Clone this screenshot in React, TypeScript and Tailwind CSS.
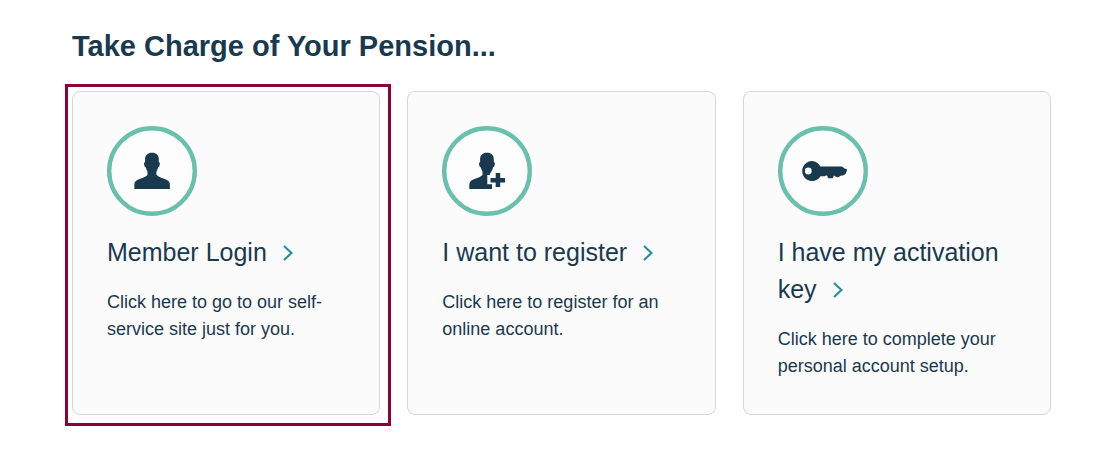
import type { ReactNode } from 'react';

interface PensionCardProps {
  title: string;
  description: string;
  icon: ReactNode;
  highlighted?: boolean;
}

const PersonIcon = () => (
  <path d="M45 26.7c4.400 0 6.800 2.500 6.800 6.300v3c1.300.3 1.300 2.200.6 4-.3.9-.8 1.400-1.400 1.500-.3 1.700-.8 3-1.600 4v3.300c2 2.600 6 3.200 9.500 4.700 3 1.200 4 3.200 4 5.500v4H27.300v-4c0-2.300 1-4.300 4-5.500 3.500-1.500 7.500-2.100 9.200-4.700v-3.300c-.8-1-1.300-2.300-1.600-4-.6-.1-1.100-.6-1.400-1.500-.7-1.800-.7-3.700.6-4v-3c0-3.800 2.500-6.300 6.900-6.300z" />
);

const RegisterIcon = () => (
  <>
    <path d="M45 26.700c4.400 0 6.800 2.500 6.800 6.300v3c1.300.3 1.300 2.200.6 4-.3.9-.8 1.400-1.400 1.500-.3 1.700-.8 3-1.600 4-.8 1.200-1.600 2.300-1.600 3.500h-2.500v9.300h4.700V63H27.300v-4c0-2.300 1-4.300 4-5.500 3.500-1.500 7.500-2.100 9.200-4.700v-3.300c-.8-1-1.300-2.300-1.600-4-.6-.1-1.100-.6-1.400-1.500-.7-1.800-.7-3.700.6-4v-3c0-3.800 2.500-6.300 6.900-6.300z" />
    <path d="M53.700 47h4.500v5h4.800v4.500h-4.800V61h-4.500v-4.500h-5.200V52h5.200z" />
  </>
);

const KeyIcon = () => (
  <path
    fillRule="evenodd"
    d="M33.300 35c4 0 7.400 2.200 9 5.400H64l2.500 2.100 2.100.6.400 1.400-1.500 3.500-2.500 1.400-1.800.2-3.500 1.900-3-1.600-1.200-.4v1.200l-.6 1.500h-4.900l-.5-2-1.400-1-1.200 1.100h-4.300A10 10 0 1 1 33.300 35zM30.300 41.600a3.400 3.400 0 1 0 0 6.800 3.400 3.400 0 0 0 0-6.800z"
  />
);

const PensionCard = ({ title, description, icon, highlighted }: PensionCardProps) => (
  <li className="relative rounded-lg border border-[#d3d8d8] bg-[#fbfbfb] p-[34px]">
    {highlighted && (
      <div className="pointer-events-none absolute -top-2 -right-3 -bottom-3 -left-2 border-3 border-[#8c0039]" />
    )}
    <a href="#" className="block">
      <svg className="size-[90px] fill-[#19394f]" viewBox="0 0 90 90" aria-hidden="true">
        <circle cx="45" cy="45" r="42.8" fill="#fdfdfd" stroke="#69c0ac" strokeWidth="4.4" />
        {icon}
      </svg>
      <h3 className="mt-[18px] text-[25px] leading-[37px]">
        {title}
        <svg
          className="ml-4 inline-block h-4 w-[10px] align-[0px]"
          viewBox="0 0 10 16"
          fill="none"
          stroke="#2690a0"
          strokeWidth="2.2"
          aria-hidden="true"
        >
          <path d="M1 1l7.500 7L1 15" />
        </svg>
      </h3>
      <p className="mt-[18px] text-lg leading-[27px]">{description}</p>
    </a>
  </li>
);

export default function App() {
  return (
    <main className="bg-white pt-6 pr-[53px] pb-[38px] pl-[72px] font-['Liberation_Sans',Arial,sans-serif] text-[#19394f]">
      <h2 className="text-[29px] leading-[44px] font-bold">Take Charge of Your Pension...</h2>
      <ul className="mt-[23px] grid grid-cols-3 gap-[27px]">
        <PensionCard
          title="Member Login"
          description="Click here to go to our self-service site just for you."
          icon={<PersonIcon />}
          highlighted
        />
        <PensionCard
          title="I want to register"
          description="Click here to register for an online account."
          icon={<RegisterIcon />}
        />
        <PensionCard
          title="I have my activation key"
          description="Click here to complete your personal account setup."
          icon={<KeyIcon />}
        />
      </ul>
    </main>
  );
}
